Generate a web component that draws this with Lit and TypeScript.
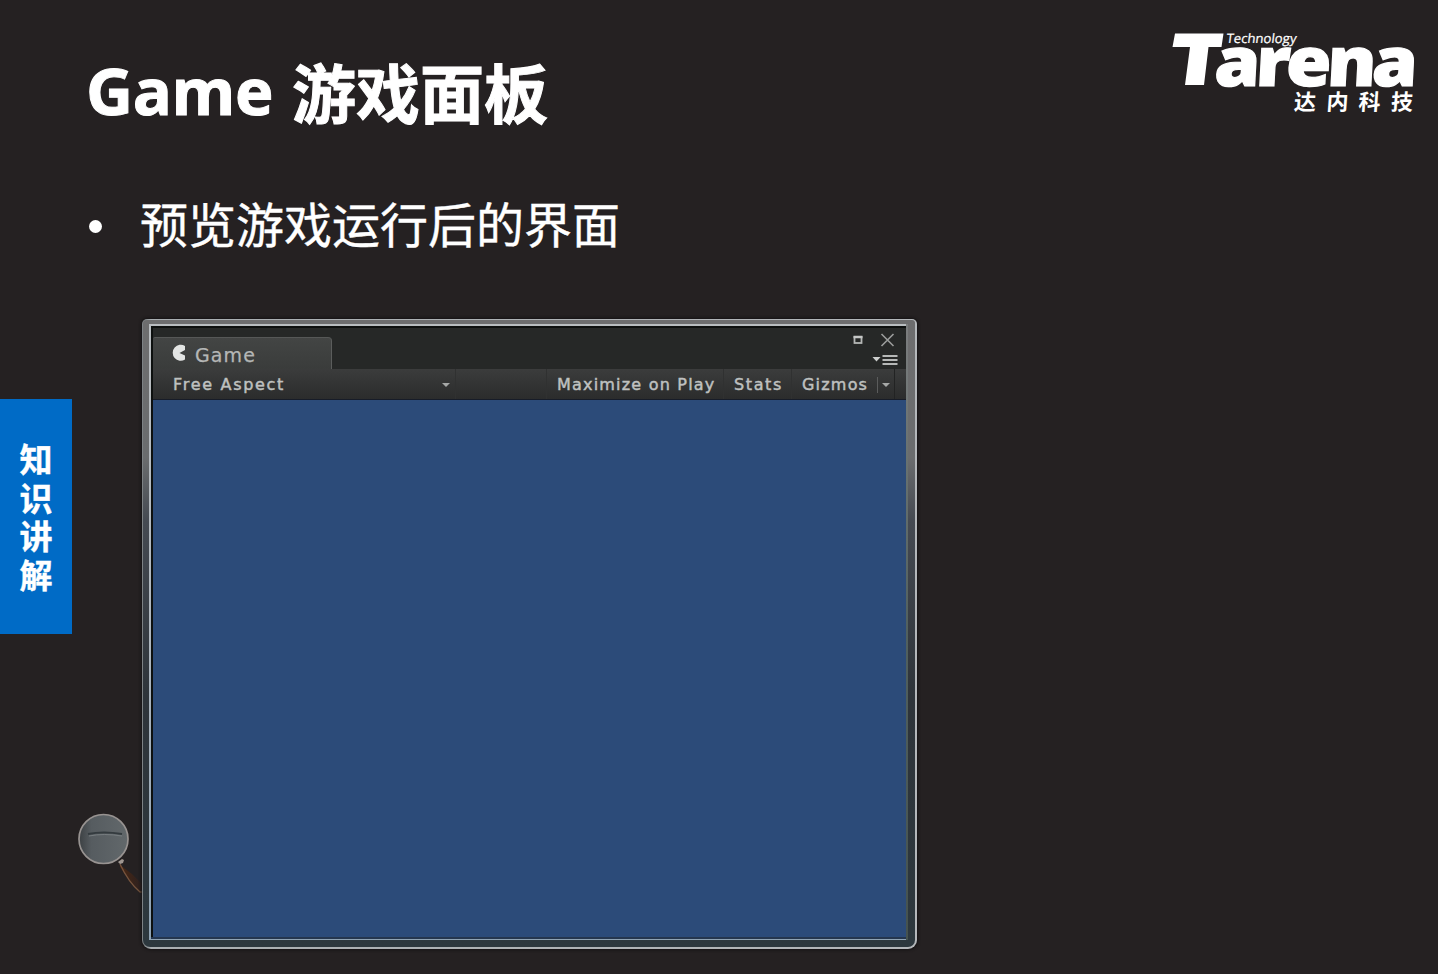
import { LitElement, html, css } from "lit";
import { customElement } from "lit/decorators.js";

@customElement("brand-logo")
class BrandLogo extends LitElement {
  static styles = css`
    :host { display: block; width: 250px; height: 90px; }
    svg { display: block; overflow: visible; }
    .latin { font-family: "Open Sans", "Noto Sans", sans-serif; font-weight: 800; fill: #fff; stroke: #fff; stroke-width: 1.2px; letter-spacing: -4px; }
    .tech { font-family: "Open Sans", "Noto Sans", sans-serif; font-size: 13px; fill: #fff; stroke: #fff; stroke-width: .25px; }
    .cjk { font-family: "Noto Sans CJK SC", sans-serif; font-weight: 700; font-size: 22px; fill: #fff; }
  `;
  render() {
    return html`<svg width="250" height="90" viewBox="0 0 250 90">
      <path fill="#fff" d="M5 3.500H53.500L51.500 17H38.500L34 55H15L20 17H2.500Z" />
      <g transform="translate(43.500 55.500) skewX(-3)">
        <text class="latin" x="0" y="0" font-size="68" textLength="199" lengthAdjust="spacingAndGlyphs">arena</text>
      </g>
      <g transform="translate(56 12.500) skewX(-7)">
        <text class="tech" x="0" y="0" textLength="70" lengthAdjust="spacingAndGlyphs">Technology</text>
      </g>
      <g transform="translate(123.500 80) skewX(-4)">
        <text class="cjk" x="0 32.500 64.500 97" y="0">达内科技</text>
      </g>
    </svg>`;
  }
}

@customElement("game-panel")
class GamePanel extends LitElement {
  static styles = css`
    :host { display: block; width: 775px; height: 630px; font-family: "DejaVu Sans", sans-serif; }
    * { box-sizing: border-box; }
    .rim {
      height: 100%; padding: 1px 2px 2px 1px; border-radius: 5px 5px 9px 9px;
      background: linear-gradient(90deg, #7d8285 0, #7d8285 3px, #a9aeb1 9px, #b4b7ba 100%);
      box-shadow: 0 0 3px 1px #141213;
    }
    .metal {
      height: 100%; padding: 4px 0 0 6px; border-radius: 4px 3px 7px 7px;
      background: linear-gradient(180deg, #6d6d6e 0, #6a6c6e 22%, #454a52 32%, #2e343a 60%, #2d383e 100%);
    }
    .edge {
      height: 616px; width: 759px; padding: 2px 2px 1px 2px;
      background:
        linear-gradient(180deg, #7b7d7e 0, #66706f 25%, #51605f 50%, #45524f 100%) right / 2px 100% no-repeat,
        linear-gradient(180deg, #b9bdc0 0, #aeb6be 50%, #8fa3b4 100%);
    }
    .inner { display: flex; flex-direction: column; height: 100%; padding: 2px 0 0 2px; background: #0d100f; border-bottom: 2px solid #25364e; }
    .tabs { display: flex; justify-content: space-between; height: 41px; background: #262827; }
    .tab {
      display: flex; align-items: center; gap: 8px; width: 179px; height: 32px; margin-top: 9px; padding: 3px 0 0 17px;
      border-top: 1px solid #565857; border-right: 1px solid #5b5d5c; border-radius: 2px 4px 0 0;
      background: linear-gradient(#434544, #3a3c3b); color: #b5b7b6; font-size: 19px; letter-spacing: 1.1px; line-height: 20px;
      -webkit-text-stroke: .25px #b5b7b6;
    }
    .pac { display: block; margin-top: -4px; }
    .controls { display: block; }
    .bar {
      display: grid; grid-template-columns: 303px 91px 177px 68px 86px 17px 1fr; align-items: center; height: 31px;
      background: linear-gradient(#3b3c3c, #2b2c2c); border-bottom: 1px solid #171c28;
      color: #bfc1c0; font-size: 16px; letter-spacing: 1.2px; white-space: nowrap; line-height: 20px;
      -webkit-text-stroke: .45px #bfc1c0;
    }
    .cell { display: flex; align-items: center; height: 30px; padding: 1px 0 0 10px; border-right: 1px solid #303131; }
    .first { padding: 1px 5px 0 20px; justify-content: space-between; }
    .aspect { letter-spacing: 1.7px; }
    .stats { letter-spacing: 1.6px; }
    .giz { position: relative; border-right: 0; }
    .giz::after { content: ""; width: 1px; height: 16px; margin-left: auto; background: #5b5c5c; }
    .arrow { width: 0; height: 0; border: 4px solid transparent; border-top: 4px solid #a6a8a7; border-bottom: 0; }
    .drop { padding-left: 4px; border-right-color: #222323; }
    .view { flex: 1; background: #2c4b79; }
  `;
  render() {
    return html`<div class="rim"><div class="metal"><div class="edge"><div class="inner">
      <div class="tabs">
        <div class="tab">
          <svg class="pac" width="17" height="18" viewBox="0 0 17 18"><path fill="#e3e5e4" d="M15 6 9.500 9l5.500 2.500v4A8 8 0 1 1 15 2Z" /></svg>
          <span>Game</span>
        </div>
        <svg class="controls" width="54" height="41" viewBox="0 0 54 41" fill="none">
          <rect x="2.500" y="9" width="7" height="6" stroke="#b4b6b5" stroke-width="1.800" />
          <path d="M1.500 9H10.500" stroke="#c5c7c6" stroke-width="2.500" />
          <path d="m29.500 6 12 12M41.500 6 29.500 18" stroke="#9b9d9c" stroke-width="1.600" />
          <path d="M20.500 29h8l-4 4.500Z" fill="#cdcfce" />
          <path d="M30.500 28h15M30.500 32h15M30.500 36h15" stroke="#b6b8b7" stroke-width="1.800" />
        </svg>
      </div>
      <div class="bar">
        <div class="cell first"><span class="aspect">Free Aspect</span><i class="arrow"></i></div>
        <div class="cell"></div>
        <div class="cell">Maximize on Play</div>
        <div class="cell stats">Stats</div>
        <div class="cell giz">Gizmos</div>
        <div class="cell drop"><i class="arrow"></i></div>
      </div>
      <div class="view"></div>
    </div></div></div></div>`;
  }
}

@customElement("app-root")
class AppRoot extends LitElement {
  static styles = css`
    :host { display: block; width: 1438px; height: 974px; overflow: hidden; background: #252122; color: #fff; font-family: "Noto Sans CJK SC", sans-serif; }
    * { box-sizing: border-box; }
    .head { display: flex; justify-content: space-between; height: 170px; padding: 30px 18px 0 86px; }
    h1 { display: flex; align-items: center; margin: 0; height: 120px; font-size: 64px; font-weight: 700; line-height: 120px; -webkit-text-stroke: 1px #fff; }
    .en { width: 206px; font-family: "Open Sans", "Noto Sans", sans-serif; font-size: 65px; letter-spacing: -.4px; }
    .point { display: flex; align-items: center; gap: 38px; height: 112px; padding-left: 89px; font-size: 48px; line-height: 105px; -webkit-text-stroke: .4px #fff; }
    .point span { height: 112px; }
    .dot { width: 13px; height: 13px; border-radius: 50%; background: #fff; }
    .stage { display: flex; height: 692px; padding-top: 37px; }
    .left { width: 142px; }
    .side {
      display: flex; flex-direction: column; align-items: center; width: 72px; height: 235px; margin-top: 80px; padding-top: 40px;
      background: #006bc6; font-size: 33px; font-weight: 700; -webkit-text-stroke: .4px #fff;
    }
    .side p { width: 33px; margin: 0; line-height: 38.500px; word-break: break-all; }
    .lens { display: block; margin: 174px 0 0 72px; overflow: visible; }
  `;
  render() {
    return html`
      <header class="head">
        <h1><span class="en">Game</span><span>游戏面板</span></h1>
        <brand-logo></brand-logo>
      </header>
      <div class="point"><i class="dot"></i><span>预览游戏运行后的界面</span></div>
      <main class="stage">
        <div class="left">
          <div class="side"><p>知识讲解</p></div>
          <svg class="lens" width="70" height="90" viewBox="0 0 70 90" fill="none">
            <defs>
              <linearGradient id="glass" x1="0" y1="0" x2="1" y2="0"><stop stop-color="#3c4043" /><stop offset=".25" stop-color="#565c60" /><stop offset="1" stop-color="#62686b" /></linearGradient>
              <linearGradient id="wood" x1="0" y1="0" x2="1" y2="0"><stop stop-color="#4a2813" /><stop offset="1" stop-color="#2b2020" /></linearGradient>
            </defs>
            <path d="M48 57 60 66 70 76V84H68C61 78 55 69 48 59Z" fill="url(#wood)" />
            <path d="M48 56C54 69 62 79 68 84H71" stroke="#76543e" stroke-width="1.300" />
            <circle cx="31.500" cy="31" r="24.500" fill="url(#glass)" stroke="#989391" stroke-width="1.700" />
            <path d="M16 26Q31 23 50 26" stroke="#343b3f" stroke-width="2" /><path d="M17 28Q32 25 50 28" stroke="#777d80" />
            <path d="m46 54 4-3 2 1-1 3-3 1Z" fill="#a09791" />
          </svg>
        </div>
        <game-panel></game-panel>
      </main>`;
  }
}
